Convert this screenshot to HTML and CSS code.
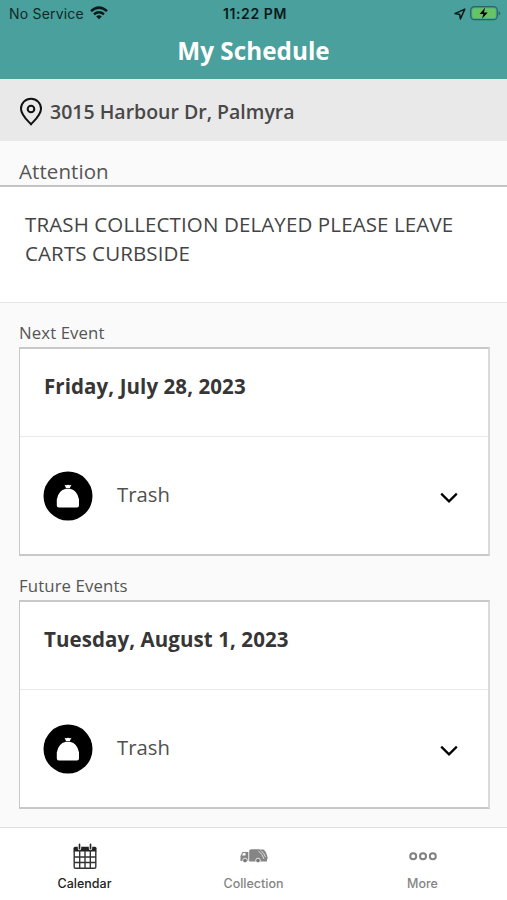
FILE: index.html
```html
<!DOCTYPE html>
<html lang="en">
<head>
<meta charset="utf-8">
<title>My Schedule</title>
<link rel="stylesheet" href="styles.css">
</head>
<body>
<div class="app">
  <header class="header">
    <div class="status">
      <div class="carrier"><span>No Service</span>
        <svg class="wifi" width="18" height="14" viewBox="0 0 18 14"><g fill="none" stroke="#081a19" stroke-width="2.5"><path d="M1 5.1Q9-1.900 17 5.100"/><path d="M4 8.300Q9 4.100 14 8.300"/></g><path d="M6.200 10.400Q9 8.200 11.800 10.400L9 13.200z" fill="#081a19"/></svg>
      </div>
      <time class="clock">11:22 PM</time>
      <div class="power">
        <svg width="12" height="12" viewBox="0 0 12 12"><path d="M10.800 1.100 1 5.600 5.700 6.400 6.400 11z" fill="none" stroke="#081a19" stroke-width="1.500" stroke-linejoin="round"/></svg>
        <svg width="31" height="15" viewBox="0 0 31 15"><rect x=".7" y=".7" width="26.600" height="13" rx="3.700" fill="none" stroke="#2b6665" stroke-width="1.200"/><rect x="2.200" y="2.200" width="23.600" height="10" rx="2" fill="#66c464"/><path d="M28.600 5v4.600q1.600-.8 1.600-2.300T28.600 5" fill="#2b6665"/><path d="M15 1.800 9.600 8h3.700l-1.200 4.800L17.700 6.500H14z" fill="#000"/></svg>
      </div>
    </div>
    <h1>My Schedule</h1>
  </header>
  <div class="address">
    <svg width="24" height="30" viewBox="0 0 24 30"><g fill="none" stroke="#111" stroke-width="2"><path d="M12 27.300C9.500 24.300 2 18.200 2 11.700a10 10 0 0 1 20 0c0 6.500-7.500 12.600-10 15.600z"/><circle cx="12" cy="12" r="3.300"/></g></svg>
    <span>3015 Harbour Dr, Palmyra</span>
  </div>
  <h2 class="attention">Attention</h2>
  <p class="notice">TRASH COLLECTION DELAYED PLEASE LEAVE<br>CARTS CURBSIDE</p>
  <main class="events">
    <section class="event">
      <h3>Next Event</h3>
      <div class="card">
        <div class="date">Friday, July 28, 2023</div>
        <div class="item">
          <svg class="bag" width="50" height="50" viewBox="0 0 50 50"><circle cx="25" cy="25" r="24.500"/><path fill="#fff" d="M21.500 13.700l1.500.6 2-.6 2 .6 1.500-.6-1.500 2.800v1.300q7.500 1.700 9 10.700v6q0 2-2 2H15.800q-2 0-2-2v-6q1.500-9 9-10.700v-1.300z"/><path d="M22.400 17.500h5.200" stroke="#000" stroke-width=".7"/></svg>
          <span class="type">Trash</span>
          <svg class="chevron" width="20" height="14" viewBox="0 0 20 14"><path d="m2.200 2.600 7.800 7.800 7.800-7.800" fill="none" stroke="#000" stroke-width="2.200"/></svg>
        </div>
      </div>
    </section>
    <section class="event">
      <h3>Future Events</h3>
      <div class="card">
        <div class="date">Tuesday, August 1, 2023</div>
        <div class="item">
          <svg class="bag" width="50" height="50" viewBox="0 0 50 50"><circle cx="25" cy="25" r="24.500"/><path fill="#fff" d="M21.500 13.700l1.500.6 2-.6 2 .6 1.500-.6-1.500 2.800v1.300q7.500 1.700 9 10.700v6q0 2-2 2H15.800q-2 0-2-2v-6q1.500-9 9-10.700v-1.300z"/><path d="M22.400 17.500h5.200" stroke="#000" stroke-width=".7"/></svg>
          <span class="type">Trash</span>
          <svg class="chevron" width="20" height="14" viewBox="0 0 20 14"><path d="m2.200 2.600 7.800 7.800 7.800-7.800" fill="none" stroke="#000" stroke-width="2.200"/></svg>
        </div>
      </div>
    </section>
  </main>
  <nav class="tabs">
    <a class="tab active">
      <svg width="28" height="28" viewBox="0 0 28 28"><path d="M2.500 5.200q0-1.500 1.500-1.500h20q1.500 0 1.500 1.500v3.300h-23z" fill="#222"/><path d="M3.200 8v16q0 1.300 1.300 1.300h19q1.300 0 1.300-1.300V8M3 14h22M3 19.500h22M8.700 8v17M14 8v17M19.300 8v17" fill="none" stroke="#333" stroke-width="1.400"/><path d="M8.500 2.500v3M19.500 2.500v3" stroke="#fff" stroke-width="3.400" stroke-linecap="round"/><path d="M8.500 1.200v4.500M19.500 1.200v4.500" stroke="#222" stroke-width="1.600" stroke-linecap="round"/></svg>
      <span>Calendar</span>
    </a>
    <a class="tab">
      <svg width="28" height="28" viewBox="0 0 28 28"><g fill="#858585"><path d="M.5 18v-5l2-4h5.800v9z"/><path d="M9.200 7.200 11 6.300h8.500l7.500 9.200v3H9.200z"/><path d="M20 6.500h3.500q2.500 1 4.300 8.700l-1.600 2z"/></g><path d="M2 12.500 3.200 10h2.300v2.500z" fill="#fff"/><path d="M18.300 8q4.200 2.500 5.700 8M21.500 8q2.800 2.500 4 6" fill="none" stroke="#ddd" stroke-width="1"/><g fill="#777" stroke="#fff" stroke-width=".8"><circle cx="5" cy="17.500" r="2.300"/><circle cx="18" cy="17.500" r="2.300"/></g></svg>
      <span>Collection</span>
    </a>
    <a class="tab">
      <svg width="28" height="28" viewBox="0 0 28 28"><g fill="none" stroke="#808080" stroke-width="2"><circle cx="4.200" cy="13.300" r="3"/><circle cx="14" cy="13.300" r="3"/><circle cx="23.800" cy="13.300" r="3"/></g></svg>
      <span>More</span>
    </a>
  </nav>
</div>
</body>
</html>
```
FILE: styles.css
```css
* { box-sizing: border-box; }
body { margin: 0; font-family: "Open Sans", sans-serif; color: #444; }
h1, h2, h3, p { margin: 0; font-weight: 400; }
svg { display: block; flex: none; }
.app { width: 507px; height: 900px; display: flex; flex-direction: column; background: #fafafa; overflow: hidden; }
.header { height: 79px; background: #49a09d; flex: none; }
.status { height: 27px; display: grid; grid-template-columns: 1fr auto 1fr; align-items: center; padding: 0 6px 0 9px; font-family: Inter, sans-serif; font-size: 14px; color: #102927; }
.carrier { display: flex; align-items: center; gap: 6px; letter-spacing: .2px; }
.wifi { margin-top: -2px; }
.clock { font-weight: 600; font-size: 14px; letter-spacing: .6px; color: #071b1a; }
.power { display: flex; align-items: center; justify-content: flex-end; gap: 4px; }
h1 { color: #fff; text-align: center; font-size: 24.300px; line-height: 47px; font-weight: 700; }
.address { height: 62px; background: #e9e9e9; display: flex; align-items: center; padding: 3px 19px 0; gap: 7px; font-size: 19.500px; font-weight: 600; color: #484848; flex: none; }
.address span { margin-top: -1px; }
.attention { height: 46px; border-bottom: 2px solid #c4c4c4; padding: 16px 19px 0; font-size: 20.500px; letter-spacing: .08px; line-height: 29px; color: #555; flex: none; }
.notice { height: 116px; background: #fff; border-bottom: 1px solid #e5e5e5; padding: 23px 25px; font-size: 20.500px; letter-spacing: .12px; line-height: 28.500px; flex: none; white-space: nowrap; }
.events { padding: 17px 17px 0 19px; flex: 1; }
.event { height: 253px; }
h3 { height: 27px; font-size: 16.800px; letter-spacing: .1px; line-height: 26px; color: #555; }
.card { height: 209px; border: solid #c8c8c8; border-width: 2px 2px 2px 1px; border-right-color: #dadada; background: #fff; }
.date { height: 88px; border-bottom: 1px solid #e9e9e9; padding: 22px 23px 0 24px; font-size: 20.500px; letter-spacing: .08px; line-height: 30px; font-weight: 700; color: #363636; }
.item { height: 117px; display: flex; align-items: center; padding: 1px 29px 0 23px; }
.type { margin: -4px auto 0 24px; font-size: 20.300px; color: #505050; }
.chevron { margin-top: 3px; }
.tabs { height: 73px; border-top: 1px solid #dedede; background: #fff; display: grid; grid-template-columns: repeat(3, 1fr); flex: none; }
.tab { display: flex; flex-direction: column; align-items: center; padding-top: 15px; gap: 4px; font-family: Inter, sans-serif; font-size: 12.500px; line-height: 18px; font-weight: 500; color: #858585; }
.active { color: #222; }
```
